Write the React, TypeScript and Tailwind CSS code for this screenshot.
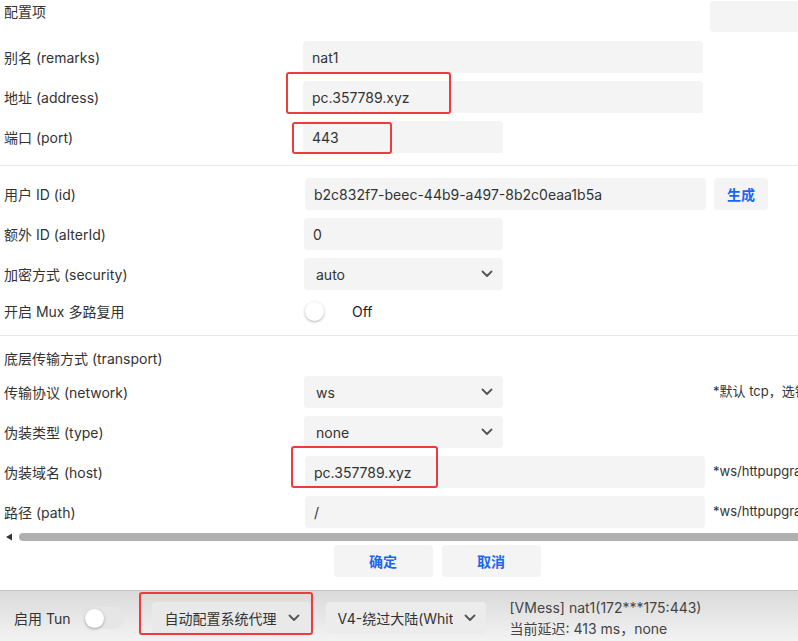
import React from "react";

const font = { fontFamily: "Inter, 'Noto Sans CJK SC', sans-serif" };

function Chevron({ className = "" }: { className?: string }) {
  return (
    <svg width="12" height="8" viewBox="0 0 12 8" className={className}>
      <path d="M1.5 1.5 L6 6 L10.5 1.5" fill="none" stroke="#555" strokeWidth="1.8" strokeLinecap="round" strokeLinejoin="round" />
    </svg>
  );
}

function Label({ children }: { children: React.ReactNode }) {
  return <div className="w-[303px] shrink-0 pl-1 text-[14px] text-[#333]">{children}</div>;
}

function Input({ value, w }: { value: string; w: string }) {
  return (
    <div className={`${w} h-8 shrink-0 rounded bg-[#f4f4f4] pl-[9px] flex items-center text-[14px] text-[#333]`}>{value}</div>
  );
}

function Select({ value, w }: { value: string; w: string }) {
  return (
    <div className={`${w} h-8 shrink-0 rounded bg-[#f4f4f4] pl-3 pr-[10px] flex items-center justify-between text-[14px] text-[#333]`}>
      <span>{value}</span>
      <Chevron />
    </div>
  );
}

function Row({ children, className = "" }: { children: React.ReactNode; className?: string }) {
  return <div className={`flex items-center h-8 whitespace-nowrap ${className}`}>{children}</div>;
}

function RedBox({ className }: { className: string }) {
  return <div className={`absolute border-2 border-[#ee3b3b] rounded-[3px] pointer-events-none ${className}`} />;
}

export default function App() {
  return (
    <div style={font} className="relative w-[798px] h-[641px] overflow-hidden bg-white text-[#333]">
      <div className="flex flex-col">
        {/* header */}
        <div className="flex items-start justify-between h-[33px]">
          <div className="pl-1 pt-[1px] text-[14px]">配置项</div>
          <div className="mt-px w-[88px] h-[31px] rounded-l bg-[#f4f4f4]" />
        </div>

        <div className="flex flex-col gap-2 mt-2">
          <Row><Label>别名 (remarks)</Label><Input value="nat1" w="w-[400px]" /></Row>
          <Row><Label>地址 (address)</Label><Input value="pc.357789.xyz" w="w-[400px]" /></Row>
          <Row><Label>端口 (port)</Label><Input value="443" w="w-[200px]" /></Row>
        </div>

        <div className="mt-3 h-px bg-[#e6e6e6]" />

        <div className="flex flex-col gap-2 mt-3">
          <Row>
            <Label>用户 ID (id)</Label>
            <div className="w-[401px] h-8 shrink-0 rounded bg-[#f4f4f4] ml-[2px] pl-[9px] flex items-center text-[14px]">b2c832f7-beec-44b9-a497-8b2c0eaa1b5a</div>
            <div className="ml-2 w-[54px] h-8 rounded bg-[#f4f4f4] flex items-center justify-center text-[14px] font-semibold text-[#1a66f0]">生成</div>
          </Row>
          <Row><Label>额外 ID (alterId)</Label><div className="ml-px"><Input value="0" w="w-[199px]" /></div></Row>
          <Row><Label>加密方式 (security)</Label><div className="ml-px"><Select value="auto" w="w-[199px]" /></div></Row>
          <div className="flex items-center h-[26px] whitespace-nowrap">
            <Label>开启 Mux 多路复用</Label>
            <div className="ml-[2px] w-[19px] h-[19px] rounded-full bg-white shadow-[0_1px_3px_rgba(0,0,0,0.3)]" />
            <span className="ml-[28px] text-[14px] text-[#222]">Off</span>
          </div>
        </div>

        <div className="mt-[11px] h-px bg-[#e6e6e6]" />

        <div className="mt-[14px] h-4 flex items-center pl-1 text-[14px]">底层传输方式 (transport)</div>

        <div className="flex flex-col gap-2 mt-[10px]">
          <Row>
            <Label>传输协议 (network)</Label>
            <div className="ml-px"><Select value="ws" w="w-[199px]" /></div>
            <span className="ml-[210px] text-[13px] text-[#333]">*默认 tcp，选错会无法连接</span>
          </Row>
          <Row><Label>伪装类型 (type)</Label><div className="ml-px"><Select value="none" w="w-[199px]" /></div></Row>
          <Row>
            <Label>伪装域名 (host)</Label>
            <div className="ml-[2px]"><Input value="pc.357789.xyz" w="w-[400px]" /></div>
            <span className="ml-2 text-[13px] text-[#333]">*ws/httpupgrade/xhttp 填写 host</span>
          </Row>
          <Row>
            <Label>路径 (path)</Label>
            <div className="ml-[2px]"><Input value="/" w="w-[400px]" /></div>
            <span className="ml-2 text-[13px] text-[#333]">*ws/httpupgrade/xhttp 填写 path</span>
          </Row>
        </div>

        {/* horizontal scrollbar */}
        <div className="mt-[4px] h-[9px] flex items-center">
          <svg width="8" height="8" viewBox="0 0 8 8" className="ml-[5px]">
            <path d="M1 4 L7 0.5 L7 7.5 Z" fill="#333" />
          </svg>
          <div className="ml-[6px] flex-1 h-[8px] rounded-l-full bg-[#b0b0b0]" />
        </div>

        <div className="mt-[4px] flex justify-center gap-[9px] pl-[76px]">
          <div className="w-[99px] h-8 rounded bg-[#f4f4f4] flex items-center justify-center text-[14px] font-semibold text-[#1a66f0]">确定</div>
          <div className="w-[99px] h-8 rounded bg-[#f4f4f4] flex items-center justify-center text-[14px] font-semibold text-[#1a66f0]">取消</div>
        </div>

        {/* bottom bar */}
        <div className="mt-[13px] h-[52px] pt-[3px] border-t border-[#c4c4c4] bg-gradient-to-b from-[#dadada] to-[#f3f3f3] flex items-center whitespace-nowrap">
          <span className="ml-[14px] pt-[1px] text-[14px] text-[#333]">启用 Tun</span>
          <div className="ml-[13px] w-[40px] h-[22px] rounded-full bg-[#e6e6e6] flex items-center pl-[1px]">
            <div className="w-[19px] h-[19px] rounded-full bg-white shadow-[0_1px_3px_rgba(0,0,0,0.3)]" />
          </div>
          <div className="ml-[28px] w-[158px] h-8 rounded bg-[#e9e9e9] pl-[13px] pr-[10px] flex items-center justify-between text-[14px] text-[#333]">
            <span>自动配置系统代理</span>
            <Chevron />
          </div>
          <div className="ml-[16px] w-[160px] h-8 rounded bg-[#ececec] pl-[12px] pr-[10px] flex items-center justify-between text-[14px] text-[#333] overflow-hidden">
            <span className="overflow-hidden">V4-绕过大陆(Whit</span>
            <Chevron className="shrink-0 ml-2" />
          </div>
          <div className="ml-[24px] flex flex-col text-[14px] leading-[21px] text-[#444]">
            <span>[VMess] nat1(172***175:443)</span>
            <span>当前延迟: 413 ms，none</span>
          </div>
        </div>
      </div>

      {/* annotation boxes */}
      <RedBox className="left-[286px] top-[72px] w-[165px] h-[42px]" />
      <RedBox className="left-[292px] top-[122px] w-[100px] h-[32px]" />
      <RedBox className="left-[291px] top-[446px] w-[147px] h-[42px]" />
      <RedBox className="left-[139px] top-[592px] w-[174px] h-[43px]" />
    </div>
  );
}
